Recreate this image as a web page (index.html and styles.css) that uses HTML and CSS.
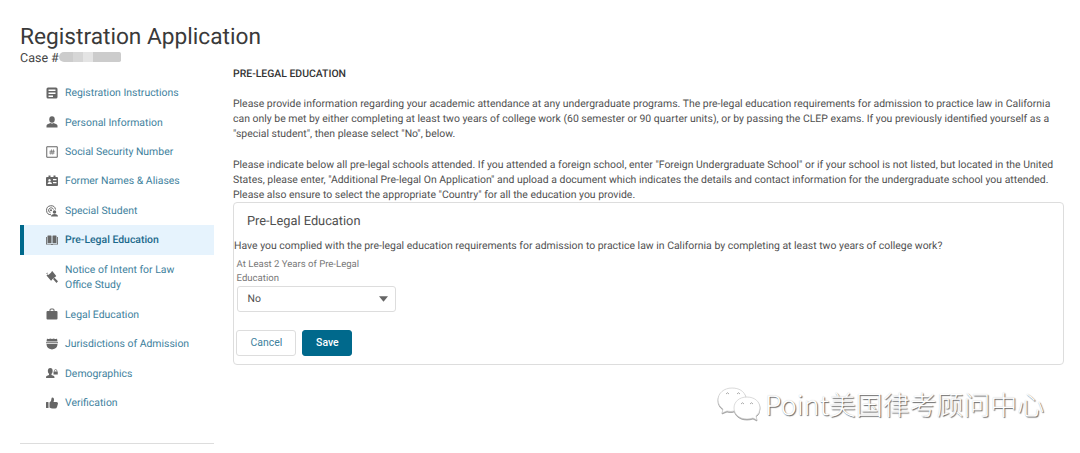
FILE: index.html
```html
<!DOCTYPE html>
<html lang="en">
<head>
    <meta charset="UTF-8">
    <title>Registration Application</title>
    <link rel="stylesheet" href="styles.css">
</head>
<body>
    <header class="page-header">
        <h1>Registration Application</h1>
        <div class="case">Case #<span class="case-number"><i></i><i></i><i></i><i></i></span></div>
    </header>

    <div class="container">
        <!-- Section navigation -->
        <nav class="sidebar">
            <a class="nav-item" href="#">
                <svg viewBox="0 0 24 24"><path fill-rule="evenodd" d="M4 1h16a3 3 0 0 1 3 3v16a3 3 0 0 1-3 3H4a3 3 0 0 1-3-3V4a3 3 0 0 1 3-3zM5 5v3h14V5zM5 11v3h14v-3zM5 17v3h9v-3z"/></svg>
                <span>Registration Instructions</span>
            </a>
            <a class="nav-item" href="#">
                <svg viewBox="0 0 24 24"><ellipse cx="12" cy="7" rx="5.5" ry="6.5"/><path d="M9 14q3 2 6 0l6 2.500q2 1 2 3V23H1v-3.500q0-2 2-3z"/></svg>
                <span>Personal Information</span>
            </a>
            <a class="nav-item" href="#">
                <svg viewBox="0 0 24 24"><path class="line" d="M1.500 1.500h21v21h-21z"/><path class="line thin" d="M11 7L9.500 17M15 7l-1.500 10M7 10.500h10.500M6.500 14H17"/></svg>
                <span>Social Security Number</span>
            </a>
            <a class="nav-item" href="#">
                <svg viewBox="0 0 24 24"><path fill-rule="evenodd" d="M2 4h3V1h4v3h6V1h4v3h3q2 0 2 2v14q0 2-2 2H2q-2 0-2-2V6q0-2 2-2zM7 8a2.500 2.500 0 1 0 .1 0zM3 18h9q0-4-4.500-4T3 18zM14 8v2.500h7V8zM14 14v2.500h7V14z"/></svg>
                <span>Former Names &amp; Aliases</span>
            </a>
            <a class="nav-item" href="#">
                <svg viewBox="0 0 24 24"><path class="line" d="M10 19.500A9 9 0 1 1 19 9M9 15.500A5 5 0 1 1 15 9"/><circle cx="10" cy="10.500" r="2"/><circle cx="17" cy="14" r="3.500"/><path d="M10 23q0-5 7-5t7 5z"/></svg>
                <span>Special Student</span>
            </a>
            <a class="nav-item active" href="#">
                <svg viewBox="0 0 24 24"><path d="M4 3h6q1 0 1 1v14H3V4q0-1 1-1zM14 3h6q1 0 1 1v14h-8V4q0-1 1-1zM0 6h1.700v13.500H11q1 1 2 0h9.300V6H24v15H14q-2 2-4 0H0z"/></svg>
                <span>Pre-Legal Education</span>
            </a>
            <a class="nav-item" href="#">
                <svg viewBox="0 0 24 24"><path d="M3.500 9L11 2.500l7.500 9L11 18zM1 9l2.500-2.500 9 11L10 19.500zM10 2.500L12.500 0l8 10-2.500 2.500zM14 16l3-2.500 7 7L21 24zM0 5l3-2v3z"/></svg>
                <span>Notice of Intent for Law<br>Office Study</span>
            </a>
            <a class="nav-item" href="#">
                <svg viewBox="0 0 24 24"><path fill-rule="evenodd" d="M7 6V4q0-3 3-3h4q3 0 3 3v2h4q2 0 2 2v13q0 2-2 2H3q-2 0-2-2V8q0-2 2-2zM9 6h6V4q0-1-1-1h-4q-1 0-1 1z"/></svg>
                <span>Legal Education</span>
            </a>
            <a class="nav-item" href="#">
                <svg viewBox="0 0 24 24"><path d="M2 1q3 2 6 0l4 1 4-1q3 2 6 0l1 6H1zM0 8.500h24v2H0zM1 12h22q0 7-6 9.500L12 23l-5-1.500Q1 19 1 12z"/></svg>
                <span>Jurisdictions of Admission</span>
            </a>
            <a class="nav-item" href="#">
                <svg viewBox="0 0 24 24"><ellipse cx="8.500" cy="8" rx="4.800" ry="6"/><path d="M6 12h5v4l5 2q1 1 1 4H0q0-3 1-4l5-2zM15 9h8.500v6H15z"/><path class="line thin" d="M17 9V7.500q0-2.500 2.300-2.500t2.300 2.500V9"/></svg>
                <span>Demographics</span>
            </a>
            <a class="nav-item" href="#">
                <svg viewBox="0 0 24 24"><path d="M1 10h3q1 0 1 1v11H1q-1 0-1-1V11q0-1 1-1zM7 11q4-2 4-8 0-2 2-2 3 0 3 4 0 3-1 5h6q3 0 3 3l-2 7q-1 3-4 3h-5q-3 0-6-2z"/></svg>
                <span>Verification</span>
            </a>
        </nav>

        <main class="content">
            <h2>PRE-LEGAL EDUCATION</h2>
            <p>Please provide information regarding your academic attendance at any undergraduate programs. The pre-legal education requirements for admission to practice law in California<br>
            can only be met by either completing at least two years of college work (60 semester or 90 quarter units), or by passing the CLEP exams. If you previously identified yourself as a<br>
            "special student", then please select "No", below.</p>
            <p>Please indicate below all pre-legal schools attended. If you attended a foreign school, enter "Foreign Undergraduate School" or if your school is not listed, but located in the United<br>
            States, please enter, "Additional Pre-legal On Application" and upload a document which indicates the details and contact information for the undergraduate school you attended.<br>
            Please also ensure to select the appropriate "Country" for all the education you provide.</p>

            <form class="card">
                <h3>Pre-Legal Education</h3>
                <div class="question">Have you complied with the pre-legal education requirements for admission to practice law in California by completing at least two years of college work?</div>
                <div class="field">
                    <div class="label">At Least 2 Years of Pre-Legal<br>Education</div>
                    <div class="select">
                        <span>No</span>
                        <svg viewBox="0 0 10 6"><path d="M0 0h10L5.500 5.600q-.5.400-1 0z"/></svg>
                    </div>
                </div>
                <div class="buttons">
                    <button type="button" class="cancel">Cancel</button>
                    <button type="button" class="save">Save</button>
                </div>
            </form>
        </main>
    </div>

    <!-- Watermark over the page -->
    <div class="watermark">
        <svg viewBox="0 0 44 38"><path d="M29 12C27 6 22 3 15 3 7 3 1 8 1 15c0 4 2 7 5 9l-1 4 5-2q4 1 7 0"/><path d="M30 12c-8 0-13 5-13 11s5 11 13 11q3 0 6-1l4 2-1-4q4-3 4-8c0-6-5-11-13-11z"/><path class="eyes" d="M9 9q1.500-2.500 3 0M20 9q1.500-2.500 3 0M24 19q1.500-2.500 3 0M33 19q1.500-2.500 3 0"/></svg>
        <span>Point美国律考顾问中心</span>
    </div>
</body>
</html>
```
FILE: styles.css
```css
/* General Styles */
* {
    box-sizing: border-box;
}

body {
    margin: 0;
    padding: 23px 16px 0 20px;
    height: 453px;
    overflow: hidden;
    background-color: #fff;
    color: #505050;
    font-family: Roboto, sans-serif;
    font-size: 10.45px;
    line-height: 15.2px;
    text-rendering: geometricPrecision;
    white-space: nowrap;
}

h1, h2, h3, p {
    margin: 0;
}

/* Header */
.page-header {
    height: 42.6px;
}

h1 {
    font-size: 22.7px;
    font-weight: 400;
    line-height: 28px;
    color: #3a3a3a;
}

.case {
    display: flex;
    font-size: 12.5px;
    color: #444;
}

.case-number {
    display: flex;
    height: 10px;
    margin-top: 1px;
    border-radius: 6px 2px 2px 6px;
    overflow: hidden;
}

.case-number i {
    width: 14px;
    background-color: #ccc;
}

.case-number i:nth-child(2) {
    width: 10px;
    background-color: #d6d6d6;
}

.case-number i:nth-child(3) {
    width: 10px;
    background-color: #e4e4e4;
}

.case-number i:nth-child(4) {
    width: 28px;
}

.container {
    display: flex;
    gap: 19px;
}

/* Sidebar */
.sidebar {
    width: 194px;
    height: 378px;
    padding-top: 12.3px;
    border-bottom: 1px solid #ddd;
}

.nav-item {
    display: flex;
    align-items: center;
    gap: 7px;
    padding: 7.15px 0 7.15px 26px;
    color: #3e819d;
    text-decoration: none;
}

.nav-item svg {
    width: 12px;
    height: 12px;
    fill: #666;
}

.nav-item .line {
    fill: none;
    stroke: #666;
    stroke-width: 2;
}

.nav-item .thin {
    stroke-width: 1.5;
}

.nav-item.active {
    padding-left: 22px;
    border-left: 4px solid #00698c;
    background-color: #e6f3fd;
    color: #1c6a8c;
    font-weight: 500;
}

/* Content */
.content {
    width: 831px;
}

h2 {
    margin-bottom: 15.2px;
    font-size: 10.45px;
    font-weight: 500;
    color: #333;
}

p {
    margin-bottom: 15.2px;
}

p + p {
    margin-bottom: 0;
}

.card {
    height: 163px;
    margin-top: -0.6px;
    border: 1px solid #ddd;
    border-radius: 4px;
}

h3 {
    padding: 10px 13px 7.4px;
    font-size: 12.8px;
    font-weight: 400;
    line-height: 18px;
}

.field {
    width: 159px;
    margin: 4.4px 0 0 2.6px;
}

.label {
    font-size: 9.55px;
    line-height: 14px;
    color: #777;
}

.select {
    display: flex;
    align-items: center;
    justify-content: space-between;
    height: 26px;
    padding: 0 7px 0 10px;
    border: 1px solid #ddd;
    border-radius: 3px;
}

.select svg {
    width: 9px;
    height: 6px;
    fill: #666;
}

.buttons {
    display: flex;
    gap: 6px;
    margin: 18px 0 0 2.4px;
}

button {
    height: 26px;
    padding: 0;
    border: 1px solid #ddd;
    border-radius: 3px;
    background-color: #fff;
    font: inherit;
}

.cancel {
    width: 60px;
    color: #3e819d;
}

.save {
    width: 50px;
    border-color: #00698c;
    background-color: #00698c;
    color: #fff;
    font-weight: 500;
}

/* Watermark */
.watermark {
    position: absolute;
    top: 385px;
    left: 717px;
    display: flex;
    gap: 4px;
    color: #fff;
    font-family: "Noto Sans CJK SC", sans-serif;
    font-size: 26.9px;
    font-weight: 300;
    line-height: 38px;
    text-shadow: 1px 1px 1px #666, 0 0 1px #ccc;
}

.watermark svg {
    width: 44px;
    height: 38px;
    fill: #fff;
    stroke: #ccc;
    stroke-width: 0.7;
    filter: drop-shadow(0.5px 1px 0.5px #999);
}

.watermark .eyes {
    fill: none;
    stroke: #888;
}
```
